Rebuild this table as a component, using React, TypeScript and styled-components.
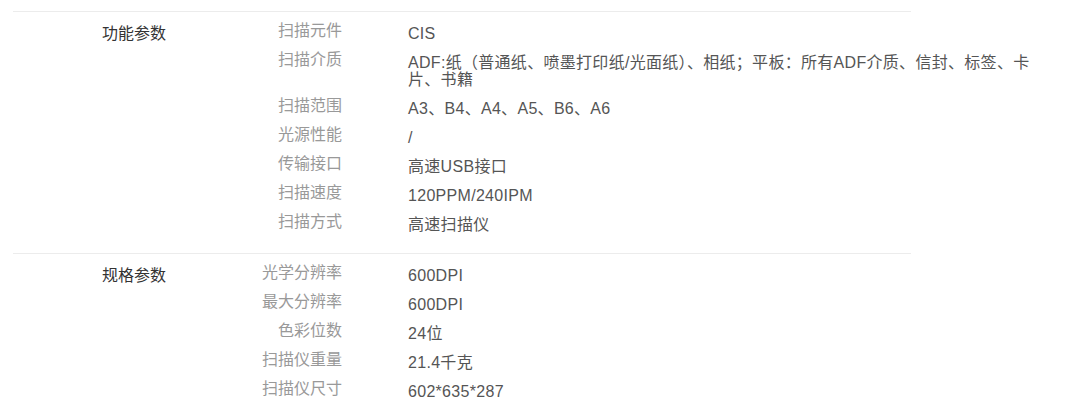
import React from "react";
import styled, { createGlobalStyle } from "styled-components";

const GlobalStyle = createGlobalStyle`
  html, body {
    margin: 0;
    padding: 0;
    background: #ffffff;
  }
  body {
    font-family: "Liberation Sans", Arial, "Noto Sans CJK SC", sans-serif;
    font-size: 16px;
  }
`;

const Page = styled.div`
  padding: 11px 0 0 13px;
  width: 898px;
`;

const Section = styled.section`
  display: flex;
  border-top: 1px solid #ececec;
  padding: 7px 0 14px;
`;

const GroupTitle = styled.h3`
  flex: 0 0 auto;
  margin: 0;
  width: 71px;
  padding: 6px 0 0 89px;
  font-size: 16px;
  font-weight: normal;
  line-height: 17px;
  color: #333333;
  white-space: nowrap;
`;

const Rows = styled.dl`
  flex: 0 0 auto;
  margin: 0;
  display: flex;
  flex-direction: column;
`;

const Row = styled.div`
  display: flex;
  align-items: flex-start;
  padding: 6px 0;
`;

const Label = styled.dt`
  flex: 0 0 169px;
  text-align: right;
  color: #999999;
  line-height: 12px;
  white-space: nowrap;
`;

const Value = styled.dd`
  flex: 0 0 625px;
  margin: 0 0 0 66px;
  color: #555555;
  line-height: 17px;
  letter-spacing: 0.3px;
`;

type Spec = { label: string; value: string };
type Group = { title: string; specs: Spec[] };

const groups: Group[] = [
  {
    title: "功能参数",
    specs: [
      { label: "扫描元件", value: "CIS" },
      {
        label: "扫描介质",
        value:
          "ADF:纸（普通纸、喷墨打印纸/光面纸）、相纸；平板：所有ADF介质、信封、标签、卡片、书籍",
      },
      { label: "扫描范围", value: "A3、B4、A4、A5、B6、A6" },
      { label: "光源性能", value: "/" },
      { label: "传输接口", value: "高速USB接口" },
      { label: "扫描速度", value: "120PPM/240IPM" },
      { label: "扫描方式", value: "高速扫描仪" },
    ],
  },
  {
    title: "规格参数",
    specs: [
      { label: "光学分辨率", value: "600DPI" },
      { label: "最大分辨率", value: "600DPI" },
      { label: "色彩位数", value: "24位" },
      { label: "扫描仪重量", value: "21.4千克" },
      { label: "扫描仪尺寸", value: "602*635*287" },
    ],
  },
];

export default function App() {
  return (
    <>
      <GlobalStyle />
      <Page>
        {groups.map((g) => (
          <Section key={g.title}>
            <GroupTitle>{g.title}</GroupTitle>
            <Rows>
              {g.specs.map((s) => (
                <Row key={s.label}>
                  <Label>{s.label}</Label>
                  <Value>{s.value}</Value>
                </Row>
              ))}
            </Rows>
          </Section>
        ))}
      </Page>
    </>
  );
}
